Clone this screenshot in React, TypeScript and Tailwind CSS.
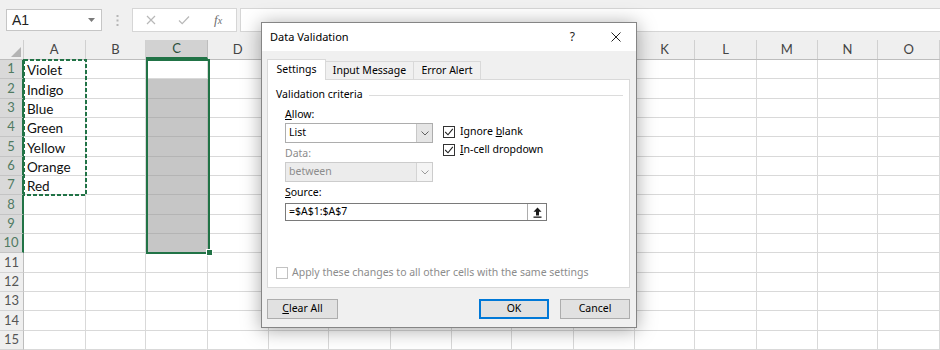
import React from 'react';

const COLS = ['A', 'B', 'C', 'D', 'E', 'F', 'G', 'H', 'I', 'J', 'K', 'L', 'M', 'N', 'O'];
const COL_W = [
  'w-[62px]', 'w-[61px]', 'w-[62px]', 'w-[61px]', 'w-[61px]', 'w-[62px]', 'w-[61px]', 'w-[61px]',
  'w-[62px]', 'w-[61px]', 'w-[61px]', 'w-[62px]', 'w-[61px]', 'w-[61px]', 'w-[62px]',
];
const ROW_H = [
  'h-[19px]', 'h-[20px]', 'h-[19px]', 'h-[19px]', 'h-[20px]', 'h-[19px]', 'h-[19px]', 'h-[20px]',
  'h-[19px]', 'h-[19px]', 'h-[20px]', 'h-[19px]', 'h-[19px]', 'h-[20px]', 'h-[19px]',
];
const DATA: Record<number, string> = {
  1: 'Violet', 2: 'Indigo', 3: 'Blue', 4: 'Green', 5: 'Yellow', 6: 'Orange', 7: 'Red',
};

function CheckBox({ checked, disabled }: { checked?: boolean; disabled?: boolean }) {
  return (
    <div
      className={
        disabled
          ? 'w-[12px] h-[12px] border border-[#c2c2c2] bg-white shrink-0'
          : 'w-[12px] h-[12px] border border-[#333333] bg-white shrink-0 flex items-center justify-center'
      }
    >
      {checked && (
        <svg width="10" height="10" viewBox="0 0 10 10">
          <polyline points="1.2,5 4,7.8 8.8,1.8" fill="none" stroke="#222" strokeWidth="1.1" />
        </svg>
      )}
    </div>
  );
}

function Chevron({ color }: { color: string }) {
  return (
    <svg width="8" height="5" viewBox="0 0 8 5">
      <polyline points="0.5,0.5 4,4 7.5,0.5" fill="none" stroke={color} strokeWidth="1" />
    </svg>
  );
}

export default function App() {
  return (
    <div className="relative w-[940px] h-[350px] overflow-hidden bg-white font-['Lato',sans-serif]">
      {/* Formula bar */}
      <div className="h-[40px] bg-[#f0f0f0] flex items-start pt-[8px]">
        <div className="ml-[6px] mt-px w-[96px] h-[22px] bg-white border border-[#c6c6c6] flex items-center pl-[5px] pr-[6px] text-[14px] text-[#222] font-['Liberation_Sans',sans-serif]">
          <span>A1</span>
          <svg className="ml-auto" width="7" height="4" viewBox="0 0 7 4">
            <path d="M0 0h7L3.5 4z" fill="#7a7a7a" />
          </svg>
        </div>
        <div className="w-[30px] h-[24px] flex items-center justify-center">
          <svg width="3" height="11" viewBox="0 0 3 11">
            <rect x="0.5" y="0" width="2" height="2" fill="#b5b5b5" />
            <rect x="0.5" y="4.5" width="2" height="2" fill="#b5b5b5" />
            <rect x="0.5" y="9" width="2" height="2" fill="#b5b5b5" />
          </svg>
        </div>
        <div className="w-[105px] h-[24px] bg-white border border-[#d6d6d6] flex items-center">
          <svg className="ml-[13px]" width="10" height="10" viewBox="0 0 10 10">
            <path d="M1 1L9 9M9 1L1 9" stroke="#b8b8b8" strokeWidth="1.2" />
          </svg>
          <svg className="ml-[22px]" width="12" height="10" viewBox="0 0 12 10">
            <polyline points="1,5.5 4.2,8.7 11,1.5" fill="none" stroke="#b8b8b8" strokeWidth="1.2" />
          </svg>
          <span className="ml-[24px] text-[13px] italic text-[#6e6e6e] font-['Liberation_Serif',serif]">
            f<span className="text-[10px]">x</span>
          </span>
        </div>
        <div className="ml-[3px] flex-1 h-[24px] bg-white border-y border-l border-[#d6d6d6]" />
      </div>

      {/* Column headers */}
      <div className="flex h-[20px] bg-[#efefef] border-b border-[#bdbdbd] text-[13px] text-[#444]">
        <div className="w-[24px] h-full border-r border-[#cfcfcf] flex items-end justify-end pr-[2px] pb-[2px]">
          <svg width="10" height="10" viewBox="0 0 10 10">
            <path d="M10 0V10H0z" fill="#b4b4b4" />
          </svg>
        </div>
        {COLS.map((c, i) => (
          <div
            key={c}
            className={
              c === 'C'
                ? `${COL_W[i]} h-full bg-[#d2d2d2] border-r border-[#bdbdbd] border-b-2 border-b-[#217346] flex items-center justify-center text-[#2b4f3b]`
                : `${COL_W[i]} h-full border-r border-[#d0d0d0] flex items-center justify-center`
            }
          >
            {c}
          </div>
        ))}
      </div>

      {/* Grid rows */}
      {ROW_H.map((h, r) => {
        const row = r + 1;
        const sel = row <= 10;
        return (
          <div key={row} className={`flex ${h}`}>
            <div
              className={
                sel
                  ? 'w-[24px] h-full bg-[#d9d9d9] border-b border-[#c4c4c4] border-r-2 border-r-[#217346] flex items-center justify-center text-[13px] text-[#4f7a62]'
                  : 'w-[24px] h-full bg-[#efefef] border-b border-[#d4d4d4] border-r border-r-[#bdbdbd] flex items-center justify-center text-[13px] text-[#555]'
              }
            >
              {row}
            </div>
            {COLS.map((c, i) => {
              const shaded = c === 'C' && row >= 2 && row <= 10;
              return (
                <div
                  key={c}
                  className={
                    shaded
                      ? `${COL_W[i]} h-full bg-[#c6c6c6] border-r border-b border-[#b4b4b4]`
                      : `${COL_W[i]} h-full border-r border-b border-[#d9d9d9] flex items-end pl-[3px] text-[13.5px] leading-[16px] text-[#111]`
                  }
                >
                  {c === 'A' && DATA[row] ? DATA[row] : null}
                </div>
              );
            })}
          </div>
        );
      })}

      {/* Copy marquee around A1:A7 */}
      <svg className="absolute left-[23px] top-[59px]" width="64" height="137" viewBox="0 0 64 137">
        <rect x="1" y="1" width="62" height="135" fill="none" stroke="#217346" strokeWidth="2" strokeDasharray="4 2" />
      </svg>

      {/* Selection C1:C10 */}
      <div className="absolute left-[146px] top-[59px] w-[64px] h-[195px] border-2 border-[#217346]" />
      <div className="absolute left-[206px] top-[249px] w-[7px] h-[7px] bg-[#217346] border border-white" />

      {/* Data Validation dialog */}
      <div className="absolute left-[261px] top-[22px] w-[376px] h-[306px] flex flex-col bg-[#f0f0f0] border border-[#858585] shadow-[0_2px_18px_rgba(0,0,0,0.35)] font-['Noto_Sans',sans-serif] text-[10.5px] text-black">
        <div className="h-[28px] shrink-0 bg-white flex items-center pl-[8px]">
          <span className="text-[11px]">Data Validation</span>
          <span className="ml-auto text-[12px] text-[#222]">?</span>
          <svg className="ml-[36px] mr-[15px]" width="10" height="10" viewBox="0 0 10 10">
            <path d="M0.5 0.5L9.5 9.5M9.5 0.5L0.5 9.5" stroke="#222" strokeWidth="1" />
          </svg>
        </div>

        <div className="flex-1 flex flex-col pl-[5px] pt-[8px]">
          <div className="relative z-10 flex items-end h-[21px]">
            <div className="w-[59px] h-[21px] bg-white border border-b-0 border-[#d9d9d9] flex items-center justify-center">
              Settings
            </div>
            <div className="w-[88px] h-[19px] border-t border-r border-[#d9d9d9] flex items-center justify-center">
              Input Message
            </div>
            <div className="w-[67px] h-[19px] border-t border-r border-[#d9d9d9] flex items-center justify-center">
              Error Alert
            </div>
          </div>

          <div className="w-[363px] h-[209px] -mt-px bg-white border border-[#d9d9d9] flex flex-col">
            <div className="mt-[8px] h-[14px] flex items-center pl-[8px] pr-[6px]">
              <span>Validation criteria</span>
              <div className="flex-1 h-px bg-[#dcdcdc] ml-[6px]" />
            </div>

            <div className="pl-[17px] mt-[5px] flex flex-col">
              <div className="flex">
                <div className="w-[148px] flex flex-col">
                  <div className="h-[14px] leading-[14px]">
                    <u>A</u>llow:
                  </div>
                  <div className="mt-[2px] h-[20px] flex bg-white border border-[#adadad]">
                    <div className="flex-1 flex items-center pl-[3px]">List</div>
                    <div className="w-[16px] bg-[#e5e5e5] border-l border-[#c8c8c8] flex items-center justify-center">
                      <Chevron color="#606060" />
                    </div>
                  </div>
                  <div className="mt-[3px] h-[14px] leading-[14px] text-[#8c8c8c]">Data:</div>
                  <div className="mt-[2px] h-[20px] flex bg-[#ececec] border border-[#cccccc] text-[#8c8c8c]">
                    <div className="flex-1 flex items-center pl-[3px]">between</div>
                    <div className="w-[16px] bg-[#f4f4f4] border-l border-[#d4d4d4] flex items-center justify-center">
                      <Chevron color="#9a9a9a" />
                    </div>
                  </div>
                </div>
                <div className="ml-[10px] pt-[19px] flex flex-col gap-[6px]">
                  <div className="h-[12px] flex items-center">
                    <CheckBox checked />
                    <span className="ml-[5px]">
                      Ignore <u>b</u>lank
                    </span>
                  </div>
                  <div className="h-[12px] flex items-center">
                    <CheckBox checked />
                    <span className="ml-[5px]">
                      <u>I</u>n-cell dropdown
                    </span>
                  </div>
                </div>
              </div>

              <div className="mt-[3px] h-[14px] leading-[14px]">
                <u>S</u>ource:
              </div>
              <div className="mt-[4px] w-[262px] h-[18px] flex bg-white border border-[#7a7a7a]">
                <div className="flex-1 flex items-center pl-[3px]">=$A$1:$A$7</div>
                <div className="w-[19px] border-l border-[#adadad] flex items-center justify-center">
                  <svg width="9" height="11" viewBox="0 0 9 11">
                    <path d="M4.5 0.5L8.5 4.8H6V8.5H3V4.8H0.5Z" fill="#1a1a1a" />
                    <rect x="0.5" y="9.5" width="8" height="1.3" fill="#1a1a1a" />
                  </svg>
                </div>
              </div>
            </div>

            <div className="mt-auto mb-[8px] pl-[8px] h-[12px] flex items-center text-[#8c8c8c]">
              <CheckBox disabled />
              <span className="ml-[4px]">Apply these changes to all other cells with the same settings</span>
            </div>
          </div>

          <div className="mt-[11px] w-[363px] h-[20px] flex gap-[11px]">
            <div className="w-[71px] h-full bg-[#e1e1e1] border border-[#adadad] flex items-center justify-center">
              <span>
                <u>C</u>lear All
              </span>
            </div>
            <div className="ml-auto w-[70px] h-full bg-[#e1e1e1] border border-[#0078d7] shadow-[inset_0_0_0_1px_#0078d7] flex items-center justify-center">
              OK
            </div>
            <div className="w-[70px] h-full bg-[#e1e1e1] border border-[#adadad] flex items-center justify-center">
              Cancel
            </div>
          </div>
        </div>
      </div>
    </div>
  );
}
